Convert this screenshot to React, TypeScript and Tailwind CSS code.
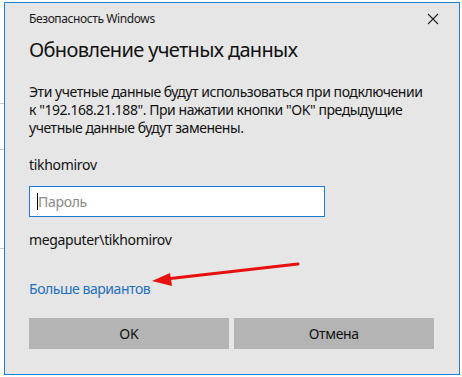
import React from "react";

export default function App() {
  const font = { fontFamily: '"Noto Sans", "Open Sans", sans-serif' };
  return (
    <div className="relative w-[462px] h-[377px] bg-white overflow-hidden" style={font}>
      {/* background fragments at left edge */}
      <div className="absolute left-0 top-[103px] w-[4px] h-px bg-[#c8c8c8]" />
      <div className="absolute left-0 top-[149px] w-[4px] h-px bg-[#c8c8c8]" />
      <div className="absolute left-0 top-[248px] w-[4px] h-px bg-[#c8c8c8]" />

      <div className="absolute left-[4px] top-[2px] w-[456px] h-[373px] border border-[#1a80d2] bg-[#e6e6e6]">
        <div className="flex flex-col pl-[24px] pr-[24px] pt-[8px]">
          <div className="flex items-center justify-between h-[16px]">
            <span className="text-[12px] leading-[16px] text-[#1a1a1a] tracking-[-0.4px]">Безопасность Windows</span>
            <svg width="12" height="12" viewBox="0 0 12 12" className="mr-[-4px]">
              <path d="M1 1 L11 11 M11 1 L1 11" stroke="#222" strokeWidth="1.1" fill="none" />
            </svg>
          </div>
          <div className="mt-[9px] text-[20px] leading-[28px] text-[#111] tracking-[-0.65px]">
            Обновление учетных данных
          </div>
          <div className="mt-[19px] text-[14px] leading-[18px] text-[#111] w-[398px] tracking-[-0.45px]">
            Эти учетные данные будут использоваться при подключении к "192.168.21.188". При нажатии кнопки "OK" предыдущие учетные данные будут заменены.
          </div>
          <div className="mt-[19px] text-[14px] leading-[18px] text-[#111] tracking-[-0.3px]">tikhomirov</div>
          <div className="mt-[12px] w-[296px] h-[31px] border-[1.5px] border-[#1a7bd0] bg-white flex items-center pl-[7px]">
            <div className="w-px h-[17px] bg-black" />
            <span className="text-[14px] text-[#8a8a8a] leading-[18px] tracking-[-0.3px]">Пароль</span>
          </div>
          <div className="mt-[14px] text-[14px] leading-[18px] text-[#111] tracking-[-0.35px]">megaputer\tikhomirov</div>
          <div className="mt-[31px] text-[14px] leading-[18px] text-[#1f6fbf] tracking-[-0.45px]">Больше вариантов</div>
          <div className="mt-[20px] flex gap-[5px] pr-[1px]">
            <div className="w-[200px] h-[31px] bg-[#b4b4b4] flex items-center justify-center text-[14px] text-[#111] tracking-[-0.3px]">OK</div>
            <div className="w-[201px] h-[31px] bg-[#b4b4b4] flex items-center justify-center text-[14px] text-[#111] tracking-[-0.3px]">Отмена</div>
          </div>
        </div>
      </div>

      {/* red arrow annotation */}
      <svg className="absolute left-0 top-0" width="462" height="377" viewBox="0 0 462 377">
        <line x1="298" y1="264" x2="166" y2="279" stroke="#e8100f" strokeWidth="3" strokeLinecap="round" />
        <polygon points="152,281 170,273 172,286" fill="#e8100f" />
      </svg>
    </div>
  );
}
